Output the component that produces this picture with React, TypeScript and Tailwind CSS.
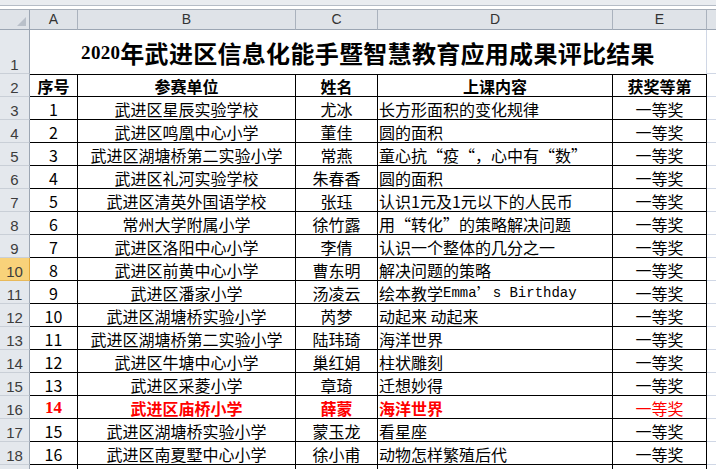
const COLS = [48, 218, 82, 235, 94];
const LETTERS = ["A", "B", "C", "D", "E"];

type Row = { n: string; school: string; name: string; topic: React.ReactNode; red?: boolean; fw?: boolean };

const ROWS: Row[] = [
  { n: "1", school: "武进区星辰实验学校", name: "尤冰", topic: "长方形面积的变化规律" },
  { n: "2", school: "武进区鸣凰中心小学", name: "董佳", topic: "圆的面积" },
  { n: "3", school: "武进区湖塘桥第二实验小学", name: "常燕", topic: "童心抗“疫“，心中有“数”", fw: true },
  { n: "4", school: "武进区礼河实验学校", name: "朱春香", topic: "圆的面积" },
  { n: "5", school: "武进区清英外国语学校", name: "张珏", topic: "认识1元及1元以下的人民币" },
  { n: "6", school: "常州大学附属小学", name: "徐竹露", topic: "用“转化”的策略解决问题", fw: true },
  { n: "7", school: "武进区洛阳中心小学", name: "李倩", topic: "认识一个整体的几分之一" },
  { n: "8", school: "武进区前黄中心小学", name: "曹东明", topic: "解决问题的策略" },
  {
    n: "9",
    school: "武进区潘家小学",
    name: "汤凌云",
    topic: (
      <>
        绘本教学<span className="font-['Liberation_Mono',monospace] text-[14px]">Emma</span>’
        <span className="font-['Liberation_Mono',monospace] text-[14px]"> s Birthday</span>
      </>
    ),
  },
  { n: "10", school: "武进区湖塘桥实验小学", name: "芮梦", topic: "动起来 动起来" },
  { n: "11", school: "武进区湖塘桥第二实验小学", name: "陆玮琦", topic: "海洋世界" },
  { n: "12", school: "武进区牛塘中心小学", name: "巢红娟", topic: "柱状雕刻" },
  { n: "13", school: "武进区采菱小学", name: "章琦", topic: "迁想妙得" },
  { n: "14", school: "武进区庙桥小学", name: "薛蒙", topic: "海洋世界", red: true },
  { n: "15", school: "武进区湖塘桥实验小学", name: "蒙玉龙", topic: "看星座" },
  { n: "16", school: "武进区南夏墅中心小学", name: "徐小甫", topic: "动物怎样繁殖后代" },
];

function RowHead({ label, h, active }: { label: string; h: string; active?: boolean }) {
  return (
    <div
      className={
        "flex w-[30px] shrink-0 items-end justify-center border-r border-b pb-[1px] font-['Liberation_Sans',sans-serif] text-[15px] leading-none text-[#3c3c3c] " +
        h +
        (active
          ? " border-r-[#e2a83a] border-b-[#e8b95a] bg-[#f8d27a]"
          : " border-r-[#9ca6b3] border-b-[#c9cfd7] bg-[#e4e8ed]")
      }
    >
      {label}
    </div>
  );
}

function Filler({ h }: { h: string }) {
  return <div className={"flex-1 border-b border-[#d0d7e5] " + h} />;
}

export default function App() {
  return (
    <div className="h-[469px] w-[716px] overflow-hidden bg-white font-['Noto_Sans_CJK_SC',sans-serif] text-[16px] text-black">
      {/* top chrome */}
      <div className="h-[5px] bg-[#e9ecf0]" />
      <div className="h-[1px] bg-[#b5bcc6]" />
      <div className="h-[3px] bg-white" />
      <div className="h-[1px] bg-[#a7afba]" />

      {/* column letters */}
      <div className="flex h-[20px]">
        <div className="relative w-[30px] shrink-0 border-r border-b border-r-[#9ca6b3] border-b-[#9ca6b3] bg-[#dfe3e8]">
          <div className="absolute right-[3px] bottom-[3px] h-0 w-0 border-t-[9px] border-l-[9px] border-t-transparent border-l-transparent border-b-0 border-r-[9px] border-r-[#b9c0c9]" />
        </div>
        {LETTERS.map((l, i) => (
          <div
            key={l}
            style={{ width: COLS[i] }}
            className="flex shrink-0 items-center justify-center border-r border-b border-r-[#aab2bd] border-b-[#9ca6b3] bg-[#dfe3e8] font-['Liberation_Sans',sans-serif] text-[14px] text-[#333]"
          >
            {l}
          </div>
        ))}
        <div className="flex-1 border-b border-[#9ca6b3] bg-[#dfe3e8]" />
      </div>

      {/* row 1: title */}
      <div className="flex h-[44px]">
        <RowHead label="1" h="h-[44px]" />
        <div className="flex w-[677px] shrink-0 items-center justify-center border-r border-[#d0d7e5] pt-[1px] text-[24px] leading-none font-bold tracking-[0.3px]">
          <span className="font-['Liberation_Serif',serif] text-[19px]">2020</span>年武进区信息化能手暨智慧教育应用成果评比结果
        </div>
        <Filler h="h-[44px]" />
      </div>

      {/* row 2: header */}
      <div className="flex h-[23px]">
        <RowHead label="2" h="h-[23px]" />
        {["序号", "参赛单位", "姓名", "上课内容", "获奖等第"].map((t, i) => (
          <div
            key={t}
            style={{ width: COLS[i] }}
            className="flex shrink-0 items-center justify-center border-t border-r border-b border-black pt-[1px] text-[16px] leading-none font-bold"
          >
            {t}
          </div>
        ))}
        <Filler h="h-[23px]" />
      </div>

      {ROWS.map((r, idx) => {
        const rowNo = String(idx + 3);
        const tone = r.red ? " text-[#ff0000] font-bold" : "";
        return (
          <div key={rowNo} className="flex h-[23px]">
            <RowHead label={rowNo} h="h-[23px]" active={rowNo === "10"} />
            <div
              style={{ width: COLS[0] }}
              className={
                "flex shrink-0 items-center justify-center border-r border-b border-black pt-[1px] leading-none" +
                (r.red ? " font-['Liberation_Serif',serif] text-[17px] font-bold text-[#ff0000]" : "")
              }
            >
              {r.n}
            </div>
            <div style={{ width: COLS[1] }} className={"flex shrink-0 items-center justify-center border-r border-b border-black pt-[1px] leading-none whitespace-nowrap" + tone}>
              {r.school}
            </div>
            <div style={{ width: COLS[2] }} className={"flex shrink-0 items-center justify-center border-r border-b border-black pt-[1px] leading-none whitespace-nowrap" + tone}>
              {r.name}
            </div>
            <div
              style={{ width: COLS[3] }}
              className={
                "flex shrink-0 items-center justify-start border-r border-b border-black pt-[1px] pl-[1px] leading-none whitespace-nowrap" +
                tone +
                (r.fw ? " [font-feature-settings:'fwid']" : "")
              }
            >
              {r.topic}
            </div>
            <div
              style={{ width: COLS[4] }}
              className={"flex shrink-0 items-center justify-center border-r border-b border-black pt-[1px] leading-none" + (r.red ? " text-[#ff0000]" : "")}
            >
              一等奖
            </div>
            <Filler h="h-[23px]" />
          </div>
        );
      })}

      {/* row 19 partial: label falls below the visible area */}
      <div className="flex h-[23px]">
        <RowHead label="" h="h-[23px]" />
        {COLS.map((w, i) => (
          <div key={i} style={{ width: w }} className="shrink-0 border-r border-black" />
        ))}
        <div className="flex-1" />
      </div>
    </div>
  );
}
